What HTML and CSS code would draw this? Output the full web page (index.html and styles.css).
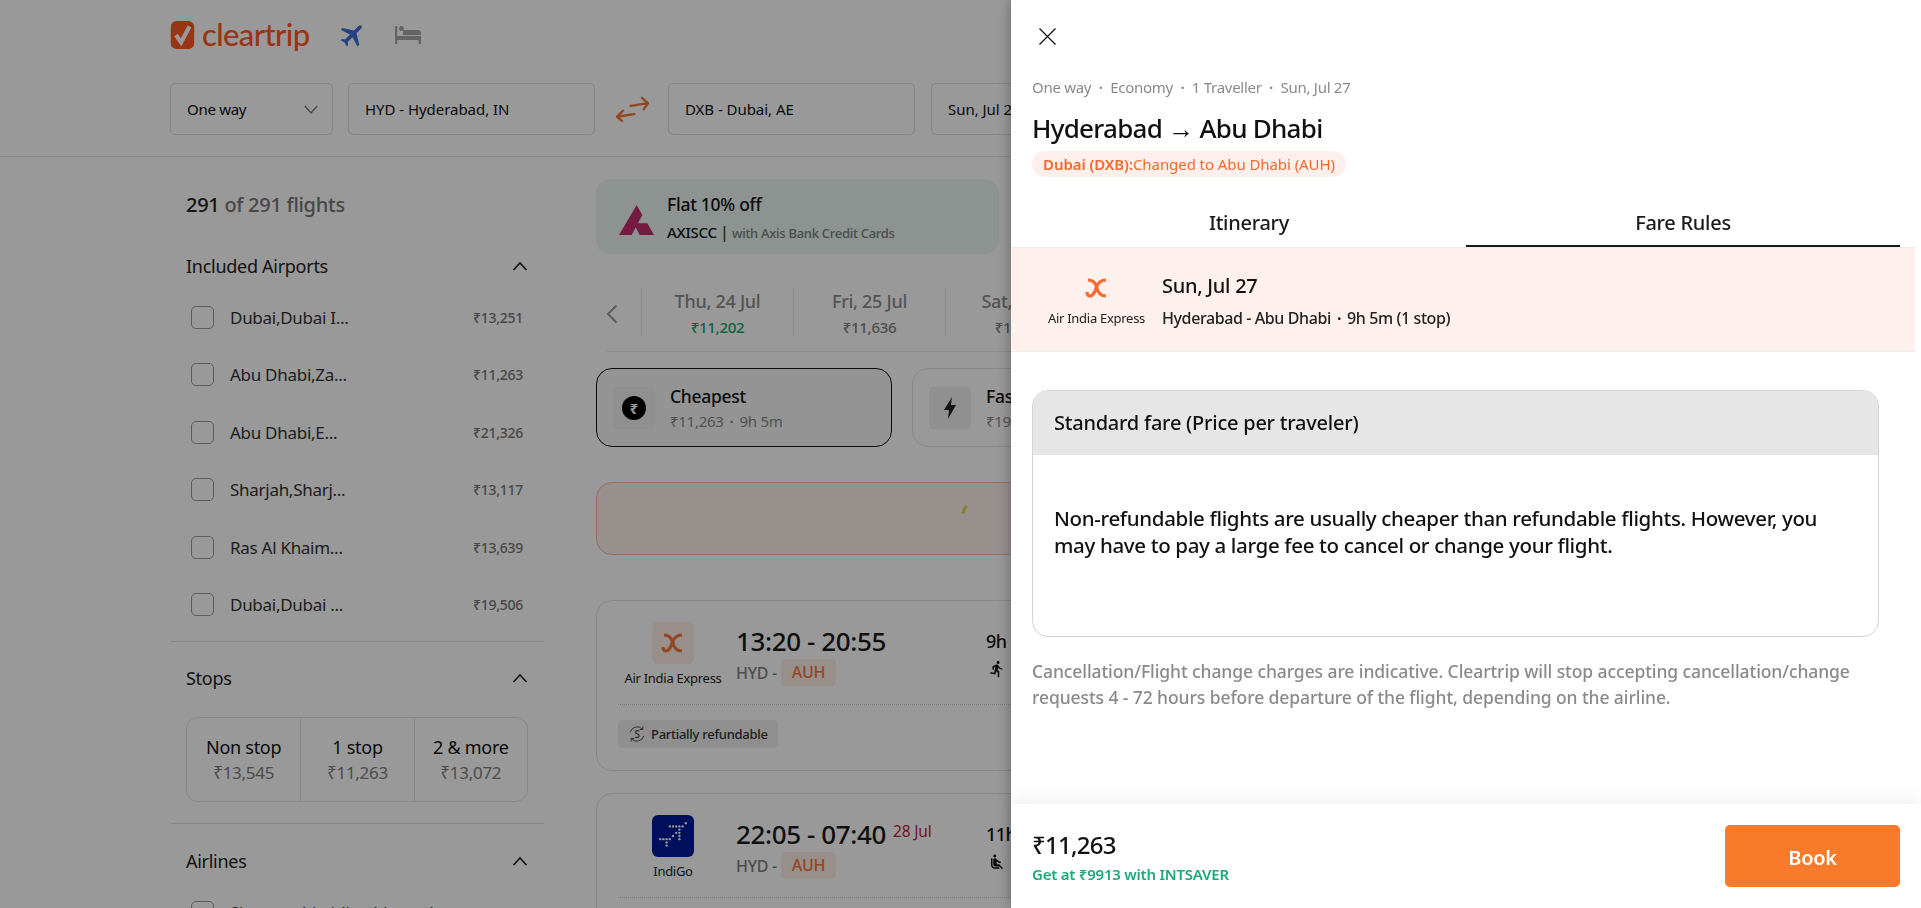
FILE: index.html
```html
<!DOCTYPE html>
<html lang="en">
<head>
<meta charset="utf-8">
<title>Cleartrip - Fare Rules</title>
<link rel="stylesheet" href="styles.css">
</head>
<body>
<div class="page">
  <header class="top">
    <div class="brand">
      <svg class="logo-mark" viewBox="0 0 25 30"><rect width="25" height="30" rx="6" fill="#ff5722"/><path d="M5.500 15l5.500 8L20 6" fill="none" stroke="#fff" stroke-width="4.500"/></svg>
      <span class="logo-word">cleartrip</span>
      <svg class="nav-plane" viewBox="0 0 24 24"><path fill="#3b6fdc" transform="rotate(45 12 12)" d="M21 16v-2l-8-5V3.500c0-.83-.67-1.500-1.500-1.500S10 2.670 10 3.500V9l-8 5v2l8-2.500V19l-2 1.500V22l3.500-1 3.500 1v-1.500L13 19v-5.500l8 2.500z"/></svg>
      <svg class="nav-bed" viewBox="0 0 26 18"><path fill="#a6a6a6" d="M0 0h2.200v10H26v8h-2.400v-4H2.200v4H0zM4 2.500a2.500 2.500 0 1 1 0 .01zM8 4h15a3 3 0 0 1 3 3v2H8z"/></svg>
    </div>
    <div class="search">
      <div class="field field-type"><span>One way</span><svg class="caret" viewBox="0 0 16 10"><path d="M1 1l7 8 7-8" fill="none" stroke="#777" stroke-width="1.500"/></svg></div>
      <div class="field field-from">HYD - Hyderabad, IN</div>
      <svg class="swap" viewBox="0 0 34 26"><path d="M14 10l19-3M26 1l7 6-5 7M1 21l19-3M8 14l-7 7 6 5" fill="none" stroke="#f4753a" stroke-width="2.400"/></svg>
      <div class="field field-to">DXB - Dubai, AE</div>
      <div class="field field-date">Sun, Jul 27</div>
    </div>
  </header>

  <div class="content">
    <aside class="filters">
      <h2 class="count"><b>291</b> of 291 flights</h2>
      <section class="filter-sec">
        <div class="sec-head"><span>Included Airports</span><svg class="chev" viewBox="0 0 16 10"><path d="M1.500 9L8 2l6.500 7" fill="none" stroke="#222" stroke-width="1.700"/></svg></div>
        <ul class="checks">
          <li><i class="box"></i><span class="lbl">Dubai,Dubai I...</span><span class="amt">₹13,251</span></li>
          <li><i class="box"></i><span class="lbl">Abu Dhabi,Za...</span><span class="amt">₹11,263</span></li>
          <li><i class="box"></i><span class="lbl">Abu Dhabi,E...</span><span class="amt">₹21,326</span></li>
          <li><i class="box"></i><span class="lbl">Sharjah,Sharj...</span><span class="amt">₹13,117</span></li>
          <li><i class="box"></i><span class="lbl">Ras Al Khaim...</span><span class="amt">₹13,639</span></li>
          <li><i class="box"></i><span class="lbl">Dubai,Dubai ...</span><span class="amt">₹19,506</span></li>
        </ul>
      </section>
      <section class="filter-sec">
        <div class="sec-head"><span>Stops</span><svg class="chev" viewBox="0 0 16 10"><path d="M1.500 9L8 2l6.500 7" fill="none" stroke="#222" stroke-width="1.700"/></svg></div>
        <div class="stops">
          <div class="stop"><span>Non stop</span><small>₹13,545</small></div>
          <div class="stop"><span>1 stop</span><small>₹11,263</small></div>
          <div class="stop"><span>2 &amp; more</span><small>₹13,072</small></div>
        </div>
      </section>
      <section class="filter-sec last">
        <div class="sec-head"><span>Airlines</span><svg class="chev" viewBox="0 0 16 10"><path d="M1.500 9L8 2l6.500 7" fill="none" stroke="#222" stroke-width="1.700"/></svg></div>
        <ul class="checks"><li><i class="box"></i><span class="lbl wide">Show multi-airline itineraries</span></li></ul>
      </section>
    </aside>

    <main class="results">
      <div class="promo">
        <svg class="axis" viewBox="0 0 105 90"><path fill="#c42d6e" d="M53 0l17 30-32 60H0zM44 55h41l20 35H62z"/></svg>
        <div class="promo-text">
          <div class="promo-title">Flat 10% off</div>
          <div class="promo-sub"><b>AXISCC</b> <span class="pipe">|</span> <span>with Axis Bank Credit Cards</span></div>
        </div>
      </div>

      <div class="dates">
        <svg class="date-prev" viewBox="0 0 12 20"><path d="M10.500 1.500L2 10l8.500 8.500" fill="none" stroke="#999" stroke-width="2"/></svg>
        <div class="date"><span>Thu, 24 Jul</span><small class="low">₹11,202</small></div>
        <div class="date"><span>Fri, 25 Jul</span><small>₹11,636</small></div>
        <div class="date"><span>Sat, 26 Jul</span><small>₹11,263</small></div>
      </div>

      <div class="sorts">
        <div class="sort active">
          <div class="sort-icon"><span class="rupee">₹</span></div>
          <div><div class="sort-name">Cheapest</div><div class="sort-sub">₹11,263<span class="dot">·</span>9h 5m</div></div>
        </div>
        <div class="sort">
          <div class="sort-icon"><svg class="bolt" viewBox="0 0 12 22"><path fill="#222" d="M8 0L0 13h5l-1 9 8-14H7z"/></svg></div>
          <div><div class="sort-name">Fastest</div><div class="sort-sub">₹19,506<span class="dot">·</span>3h 40m</div></div>
        </div>
      </div>

      <div class="notice"><span class="tick"></span></div>

      <article class="flight">
        <div class="flight-main">
          <div class="airline">
            <div class="air-logo aix"><svg class="aix-mark" viewBox="0 0 24 24"><path d="M21 4c-7 0-9 5-10 8-1 5-4 8-6 8s-3-2-3-4M3 4c6 0 8 4 9 8 1 5 4 8 9 8" fill="none" stroke="#f4753a" stroke-width="3.200"/></svg></div>
            <span>Air India Express</span>
          </div>
          <div class="times">
            <div class="time">13:20 - 20:55</div>
            <div class="route">HYD - <span class="code">AUH</span></div>
          </div>
          <div class="dur">
            <div class="dur-val">9h 5m</div>
            <div class="dur-sub"><svg viewBox="0 0 24 24"><path fill="#111" d="M13.490 5.480c1.100 0 2-.9 2-2s-.9-2-2-2-2 .9-2 2 .9 2 2 2zm-3.600 13.900l1-4.400 2.100 2v6h2v-7.500l-2.100-2 .6-3c1.300 1.500 3.300 2.500 5.500 2.500v-2c-1.900 0-3.500-1-4.300-2.400l-1-1.600c-.4-.6-1-1-1.700-1-.3 0-.5.1-.8.1l-5.200 2.200v4.700h2v-3.400l1.800-.7-1.600 8.100-4.900-1-.4 2 7 1.400z"/></svg></div>
          </div>
        </div>
        <div class="flight-tags">
          <span class="tag"><svg viewBox="0 0 20 20"><path d="M2.500 8a8 8 0 0 1 13.500-3.500M17.500 12a8 8 0 0 1-13.500 3.500M16.500 1.500v3.500H13M3.500 18.500V15H7" fill="none" stroke="#444" stroke-width="1"/><text x="10" y="14" text-anchor="middle" class="tag-s">S</text></svg>Partially refundable</span>
        </div>
      </article>

      <article class="flight">
        <div class="flight-main">
          <div class="airline">
            <div class="air-logo indigo">
              <svg class="indigo-mark" viewBox="0 0 30 30"><g fill="#fff"><circle cx="27" cy="3" r="1.100"/><circle cx="24" cy="6" r="1.100"/><circle cx="21" cy="6" r="1.100"/><circle cx="18" cy="6" r="1.100"/><circle cx="15" cy="6" r="1.100"/><circle cx="12" cy="6" r="1.100"/><circle cx="21" cy="9" r="1.100"/><circle cx="21" cy="12" r="1.100"/><circle cx="21" cy="15" r="1.100"/><circle cx="21" cy="18" r="1.100"/><circle cx="18" cy="12" r="1.100"/><circle cx="15" cy="15" r="1.100"/><circle cx="12" cy="18" r="1.100"/><circle cx="9" cy="21" r="1.100"/><circle cx="3" cy="18" r="1.100"/><circle cx="6" cy="18" r="1.100"/><circle cx="9" cy="18" r="1.100"/><circle cx="9" cy="24" r="1.100"/></g></svg>
            </div>
            <span>IndiGo</span>
          </div>
          <div class="times">
            <div class="time">22:05 - 07:40<sup class="next">28 Jul</sup></div>
            <div class="route">HYD - <span class="code">AUH</span></div>
          </div>
          <div class="dur">
            <div class="dur-val">11h 35m</div>
            <div class="dur-sub"><svg viewBox="0 0 24 24"><path fill="#111" d="M7.590 5.410c-.78-.78-.78-2.050 0-2.830.78-.78 2.050-.78 2.830 0 .78.78.78 2.050 0 2.830-.79.79-2.050.79-2.830 0zM6 16V7H4v9c0 2.760 2.240 5 5 5h6v-2H9c-1.660 0-3-1.340-3-3zm14 4.070L14.930 15H11.500v-3.680c1.400 1.150 3.600 2.160 5.500 2.160v-2.160c-1.660.02-3.610-.87-4.670-2.040l-1.400-1.550c-.19-.21-.43-.38-.69-.5-.29-.14-.62-.23-.96-.23h-.03C8.010 7 7 8.010 7 9.250V15c0 1.660 1.340 3 3 3h5.070l3.500 3.500L20 20.070z"/></svg></div>
          </div>
        </div>
      </article>
    </main>
  </div>
</div>

<div class="scrim"></div>

<aside class="drawer">
  <div class="drawer-body">
    <div class="drawer-head">
      <svg class="close" viewBox="0 0 17 17"><path d="M.5.5l16 16M16.500.5l-16 16" stroke="#111" stroke-width="1.200" fill="none"/></svg>
      <div class="meta">One way<span class="dot">·</span>Economy<span class="dot">·</span>1 Traveller<span class="dot">·</span>Sun, Jul 27</div>
      <h1 class="title">Hyderabad → Abu Dhabi</h1>
      <div class="changed"><b>Dubai (DXB):</b>Changed to Abu Dhabi (AUH)</div>
    </div>
    <nav class="tabs">
      <div class="tab">Itinerary</div>
      <div class="tab on">Fare Rules</div>
    </nav>
    <div class="leg">
      <div class="leg-air">
        <svg class="leg-mark" viewBox="0 0 24 24"><path d="M21 4c-7 0-9 5-10 8-1 5-4 8-6 8s-3-2-3-4M3 4c6 0 8 4 9 8 1 5 4 8 9 8" fill="none" stroke="#f96a2c" stroke-width="3.200"/></svg>
        <span>Air India Express</span>
      </div>
      <div>
        <div class="leg-date">Sun, Jul 27</div>
        <div class="leg-route">Hyderabad - Abu Dhabi<span class="dot">·</span>9h 5m (1 stop)</div>
      </div>
    </div>
    <div class="rules">
      <div class="fare">
        <div class="fare-head">Standard fare (Price per traveler)</div>
        <p class="fare-text">Non-refundable flights are usually cheaper than refundable flights. However, you may have to pay a large fee to cancel or change your flight.</p>
      </div>
      <p class="note">Cancellation/Flight change charges are indicative. Cleartrip will stop accepting cancellation/change requests 4 - 72 hours before departure of the flight, depending on the airline.</p>
    </div>
  </div>
  <footer class="buy">
    <div>
      <div class="price">₹11,263</div>
      <div class="save">Get at ₹9913 with INTSAVER</div>
    </div>
    <div class="book">Book</div>
  </footer>
</aside>
</body>
</html>
```

FILE: styles.css
```css
* { box-sizing: border-box; }
html, body { margin: 0; height: 100%; overflow: hidden; }
body { font-family: "Noto Sans", "Open Sans", sans-serif; color: #111; background: #fff; font-size: 14px; letter-spacing: -0.02em; }
h1, h2, p, ul { margin: 0; padding: 0; list-style: none; }

.dot { display: inline-block; margin: 0 6px; font-weight: 700; }

.page { width: 1921px; height: 908px; overflow: hidden; }

.top { height: 157px; border-bottom: 1px solid #e4e4e4; padding: 20px 0 0 170px; }
.brand { display: flex; align-items: center; height: 30px; }
.logo-mark { width: 25px; height: 28px; }
.logo-word { font-family: Lato, sans-serif; font-size: 31px; font-weight: 500; line-height: 30px; color: #ff5722; margin-left: 7px; letter-spacing: -0.02em; position: relative; top: -1px; }
.nav-plane { width: 30px; height: 30px; margin-left: 28px; }
.nav-bed { width: 26px; height: 18px; margin-left: 27px; }

.search { display: flex; align-items: center; margin-top: 33px; }
.field { height: 52px; border: 1px solid #ddd; border-radius: 5px; display: flex; align-items: center; padding-left: 16px; font-size: 15px; }
.field-type { width: 163px; justify-content: space-between; padding-right: 14px; margin-right: 15px; }
.caret { width: 14px; height: 9px; }
.field-from { width: 247px; letter-spacing: -0.003em; }
.swap { width: 33px; height: 26px; margin: 0 19px 0 21px; }
.field-to { width: 247px; margin-right: 16px; letter-spacing: -0.003em; }
.field-date { width: 200px; letter-spacing: -0.003em; }

.content { display: flex; padding-left: 170px; }

.filters { width: 374px; padding-top: 34px; flex: none; }
.count { font-size: 20px; line-height: 28px; font-weight: 500; color: #777; padding-left: 16px; margin-bottom: 33px; }
.count b { color: #222; font-weight: 500; }
.filter-sec { border-bottom: 1px solid #e0e0e0; padding: 0 16px 21px; }
.filter-sec + .filter-sec { padding-top: 22px; }
.filter-sec.last { border: 0; padding-top: 23px; }
.sec-head { display: flex; justify-content: space-between; align-items: center; height: 28px; font-size: 18px; color: #222; }
.chev { width: 16px; height: 10px; }
.checks { padding: 26px 5px 4px; }
.checks li { display: flex; align-items: center; height: 23px; margin-bottom: 34.400px; font-size: 17px; color: #333; }
.checks li:last-child { margin-bottom: 0; }
.box { width: 23px; height: 23px; border: 1.500px solid #999; border-radius: 5px; margin-right: 16px; flex: none; background: #fff; }
.lbl { flex: 1; white-space: nowrap; }
.amt { font-size: 14px; color: #777; font-weight: 500; }
.stops { display: grid; grid-template-columns: repeat(3, 1fr); height: 85px; margin-top: 25px; padding-top: 2px; border: 1px solid #e2e2e2; border-radius: 12px; }
.stop { display: flex; flex-direction: column; align-items: center; justify-content: center; font-size: 18px; line-height: 26px; border-left: 1px solid #e2e2e2; margin-top: -2px; padding-top: 2px; }
.stop:first-child { border-left: 0; }
.stop small { font-size: 17px; color: #808080; }

.results { margin-left: 52px; width: 640px; padding-top: 22px; flex: none; }
.promo { height: 75px; border-radius: 14px; background: #e9f6f1; display: flex; align-items: center; padding-left: 23px; width: 403px; }
.axis { width: 35px; height: 30px; margin-right: 13px; position: relative; top: 3px; }
.promo-title { font-size: 17.500px; font-weight: 500; line-height: 24px; margin: 1px 0 6px; }
.promo-sub { font-size: 13px; font-weight: 500; color: #808080; line-height: 20px; }
.promo-sub b { font-size: 15px; font-weight: 500; color: #111; }
.pipe { color: #444; font-size: 17px; }

.dates { display: flex; margin: 34px 0 16px 11px; padding-bottom: 15px; border-bottom: 1px solid #e4e4e4; height: 64px; width: 500px; }
.date-prev { width: 12px; height: 20px; align-self: center; margin: 4px 23px 0 -1px; flex: none; }
.date { width: 152px; height: 48px; border-left: 1px solid #e4e4e4; display: flex; flex-direction: column; align-items: center; font-size: 18px; font-weight: 500; color: #8c8c8c; line-height: 26px; flex: none; }
.date small { font-size: 15px; color: #808080; }
.date small.low { color: #11a670; }

.sorts { display: flex; gap: 20px; }
.sort { width: 296px; height: 79px; border: 1px solid #e2e2e2; border-radius: 16px; display: flex; align-items: center; padding-left: 16px; gap: 15px; flex: none; }
.sort.active { border-color: #111; background: #f7f7f7; }
.sort-icon { width: 42px; height: 42px; background: #f0f0f0; border-radius: 4px; display: flex; align-items: center; justify-content: center; }
.rupee { width: 24px; height: 24px; border-radius: 50%; background: #000; color: #fff; font-size: 15px; line-height: 24px; text-align: center; font-weight: 700; }
.bolt { width: 12px; height: 22px; }
.sort-name { font-size: 17.500px; font-weight: 500; line-height: 26px; margin-top: 1px; }
.sort-sub { font-size: 15px; color: #888; line-height: 25px; }

.notice { height: 73px; width: 640px; margin-top: 35px; border: 1px solid #f7b8a6; background: #fdf0ec; border-radius: 16px; position: relative; }
.tick { position: absolute; left: 366px; top: 22px; width: 3px; height: 9px; background: #e8d23a; transform: rotate(25deg); border-radius: 2px; }

.flight { width: 640px; height: 171px; margin-top: 45px; border: 1px solid #e2e2e2; border-radius: 16px; padding: 21px 0 0 21px; }
.flight + .flight { margin-top: 22px; }
.flight-main { display: flex; height: 83px; border-bottom: 1px dotted #ccc; }
.airline { width: 110px; display: flex; flex-direction: column; align-items: center; font-size: 13px; color: #222; white-space: nowrap; }
.airline span { margin-top: 5px; line-height: 18px; }
.air-logo { width: 42px; height: 42px; border-radius: 6px; display: flex; align-items: center; justify-content: center; }
.aix { background: #fdeee8; }
.aix-mark { width: 24px; height: 24px; }
.indigo { background: #001a99; }
.indigo-mark { width: 32px; height: 32px; }
.times { width: 250px; margin-left: 8px; }
.time { font-size: 26px; line-height: 38px; font-weight: 500; color: #1a1a1a; white-space: nowrap; letter-spacing: -0.015em; }
.next { font-size: 15.500px; font-weight: 400; color: #c4203a; vertical-align: 7px; line-height: 0; margin-left: 7px; letter-spacing: -0.01em; }
.route { display: flex; align-items: center; gap: 5px; font-size: 16px; font-weight: 500; color: #808080; margin-top: -1px; }
.code { width: 55px; height: 27px; background: #fdeee8; color: #f4753a; border-radius: 4px; text-align: center; line-height: 27px; margin-left: -1px; }
.dur-val { font-size: 18px; font-weight: 500; line-height: 38px; white-space: nowrap; letter-spacing: -0.03em; }
.dur-sub svg { width: 18px; height: 18px; margin-left: 2px; display: block; }
.flight-tags { padding-top: 15px; }
.tag { display: inline-flex; align-items: center; gap: 5px; height: 28px; padding: 0 10px; background: #efefef; border-radius: 4px; font-size: 13px; font-weight: 500; color: #333; width: 160px; white-space: nowrap; }
.tag svg { width: 18px; height: 18px; flex: none; }
.tag-s { font-size: 11px; fill: #444; }

.scrim { position: fixed; inset: 0; background: rgba(0, 0, 0, .4); }
.drawer { position: fixed; top: 0; right: 0; bottom: 0; width: 910px; background: #fff; box-shadow: 0 0 14px rgba(0, 0, 0, .35); display: flex; flex-direction: column; }
.drawer-body { flex: 1; width: 904px; }
.drawer-head { padding: 28px 0 0 21px; height: 197px; }
.close { width: 17px; height: 17px; display: block; margin-left: 7px; }
.meta { font-size: 15px; line-height: 20px; color: #8a8a8a; margin-top: 32px; }
.meta .dot { margin: 0 7.500px; }
.title { font-size: 26px; line-height: 34px; font-weight: 500; margin-top: 14px; color: #111; letter-spacing: -0.028em; }
.changed { display: inline-block; height: 26px; line-height: 26px; margin-top: 6px; padding: 0 11px; border-radius: 13px; background: #fdf0ec; font-size: 15px; color: #f9682a; letter-spacing: -0.005em; }
.changed b { font-weight: 600; }
.tabs { display: flex; margin: 0 15px 0 21px; }
.tab { flex: 1; height: 50px; text-align: center; font-size: 20px; font-weight: 500; line-height: 52px; color: #1a1a1a; }
.tab.on { border-bottom: 2px solid #1a1a1a; }
.leg { height: 105px; background: #fef0ec; border: 1px solid #ececec; border-width: 1px 0; display: flex; align-items: center; }
.leg-air { width: 151px; padding: 3px 0 0 20px; display: flex; flex-direction: column; align-items: center; font-size: 13px; color: #222; white-space: nowrap; }
.leg-mark { width: 24px; height: 24px; }
.leg-air span { margin-top: 9px; line-height: 18px; }
.leg-date { font-size: 20px; font-weight: 500; line-height: 28px; padding-top: 3px; }
.leg-route { font-size: 16px; font-weight: 500; line-height: 24px; margin-top: 6px; color: #222; letter-spacing: -0.025em; }
.rules { padding: 38px 36px 0 21px; }
.fare { height: 247px; border: 1px solid #d4d4d4; border-radius: 16px; overflow: hidden; }
.fare-head { height: 64px; background: #e6e6e6; font-size: 20px; font-weight: 500; line-height: 64px; padding-left: 21px; color: #111; letter-spacing: -0.012em; }
.fare-text { padding: 50px 30px 0 21px; font-size: 20.500px; font-weight: 500; line-height: 27px; color: #111; letter-spacing: -0.017em; }
.note { margin-top: 21px; font-size: 17.500px; font-weight: 500; line-height: 26px; color: #8a8a8a; letter-spacing: -0.005em; }
.buy { height: 104px; flex: none; background: #fff; box-shadow: 0 -6px 16px rgba(0, 0, 0, .06); display: flex; justify-content: space-between; padding: 21px 21px 0 21px; position: relative; }
.price { font-size: 24px; font-weight: 500; line-height: 40px; letter-spacing: -0.03em; }
.save { font-size: 15px; font-weight: 600; color: #1ea97c; line-height: 20px; margin-top: -1px; letter-spacing: -0.015em; }
.book { width: 175px; height: 62px; border-radius: 5px; background: #f97a2a; color: #fff; font-size: 20px; font-weight: 600; line-height: 66px; text-align: center; }
```
